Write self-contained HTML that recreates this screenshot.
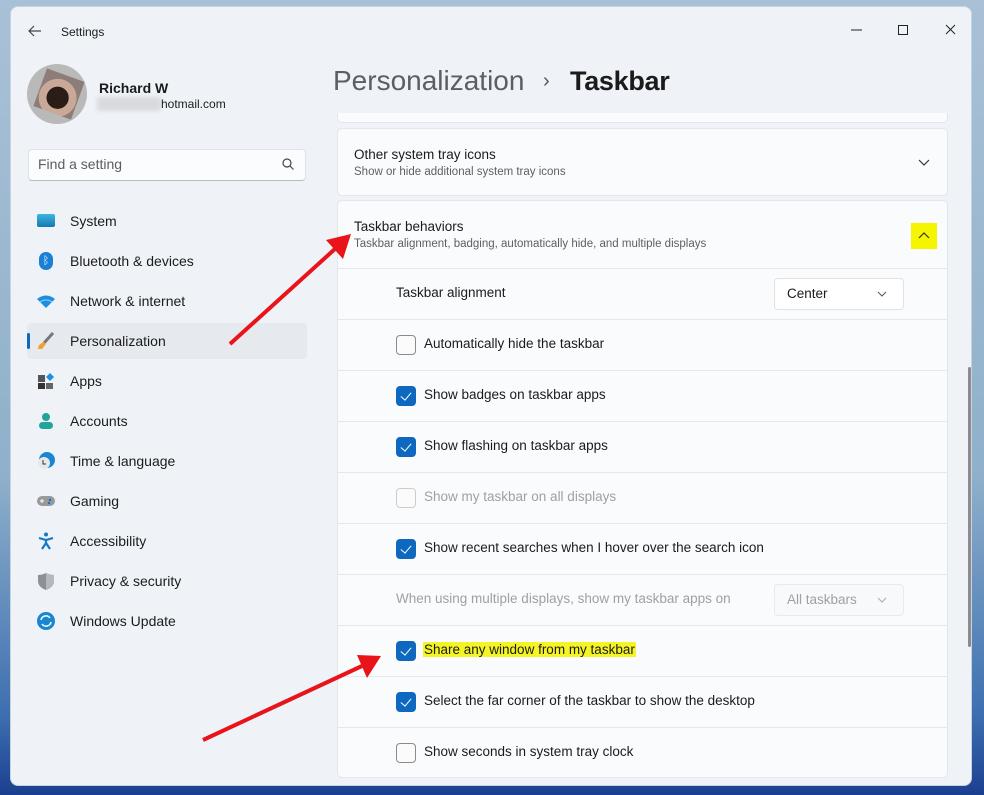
<!DOCTYPE html>
<html><head><style>
*{box-sizing:border-box;margin:0;padding:0}
body{width:984px;height:795px;overflow:hidden;font-family:"Liberation Sans",sans-serif;background:linear-gradient(180deg,#a9c1d6 0%,#8fb0cb 60%,#3d6fb0 90%,#1b3f8f 100%);position:relative}
.win{position:absolute;left:10px;top:6px;width:962px;height:780px;background:#eff3f8;border-radius:8px;overflow:hidden;border:1px solid #c9d3dd}
.t{position:absolute;white-space:nowrap;color:#1b1b1b}
.nav{position:absolute;left:16px;width:280px;height:36px;border-radius:4px}
.nav .t{left:43px;top:10px;font-size:14px}
.ic{position:absolute;left:10px;top:9px;width:18px;height:18px}
.clip{position:absolute;left:326px;top:106px;width:620px;height:674px;overflow:hidden}
.card{position:absolute;left:0;width:611px;background:#f9fbfd;border:1px solid #e3e6ea;border-radius:5px}
.row{position:absolute;left:0;width:609px;height:51px;border-top:1px solid #e5e7ea}
.row .t{font-size:13.5px;left:86px;top:16px}
.cb{position:absolute;left:58px;top:15px;width:20px;height:20px;border-radius:4px;border:1px solid #8a8a8a;background:#fbfbfb}
.cb.on{background:#0f68c0;border-color:#0f68c0}
.cb.on::after{content:"";position:absolute;left:6px;top:3px;width:5px;height:9px;border:solid #fff;border-width:0 1.5px 1.5px 0;transform:rotate(40deg)}
.dd{position:absolute;left:436px;top:9px;width:130px;height:32px;border:1px solid #e0e2e5;border-radius:4px;background:#fff;font-size:13.5px}
</style></head><body>
<div class="win">
<svg style="position:absolute;left:16px;top:17px" width="16" height="14"><path d="M14 7H2M7 2L2 7l5 5" stroke="#444" stroke-width="1.2" fill="none"/></svg>
<div class="t" style="left:50px;top:18px;font-size:12px">Settings</div>
<svg style="position:absolute;left:840px;top:15px" width="110" height="16"><path d="M0 8h11" stroke="#222"/><rect x="47.5" y="3.5" width="9" height="9" fill="none" stroke="#222"/><path d="M95 3l9 9M104 3l-9 9" stroke="#222"/></svg>
<div style="position:absolute;left:16px;top:57px;width:60px;height:60px;border-radius:50%;background:#b9b9b9;overflow:hidden"><div style="position:absolute;left:12px;top:10px;width:40px;height:40px;transform:rotate(20deg);background:radial-gradient(circle at 50% 60%,#2a1d18 0 35%,#c9a898 36% 60%,#8d7d78 61%)"></div></div>
<div class="t" style="left:88px;top:73px;font-size:14px;font-weight:bold">Richard W</div>
<div style="position:absolute;left:86px;top:90px;width:64px;height:14px;background:#d8dadd;filter:blur(2px)"></div>
<div class="t" style="left:150px;top:90px;font-size:12px">hotmail.com</div>
<div style="position:absolute;left:17px;top:142px;width:278px;height:32px;background:#fbfcfd;border:1px solid #dfe2e6;border-bottom-color:#b8bcc2;border-radius:4px"></div>
<div class="t" style="left:27px;top:149px;font-size:14px;color:#5d5d5d">Find a setting</div>
<svg style="position:absolute;left:270px;top:150px" width="14" height="14"><circle cx="6" cy="6" r="4" fill="none" stroke="#444" stroke-width="1.2"/><path d="M9 9l3.5 3.5" stroke="#444" stroke-width="1.2"/></svg>

<div class="nav" style="top:196px"><div class="ic" style="background:linear-gradient(#3fb5e0,#1479b0);height:13px;top:11px;border-radius:2px"></div><div class="t">System</div></div>
<div class="nav" style="top:236px"><div class="ic" style="background:#1b7fd6;border-radius:9px;width:14px;left:12px;color:#fff;font-size:11px;text-align:center;line-height:18px">ᛒ</div><div class="t">Bluetooth &amp; devices</div></div>
<div class="nav" style="top:276px"><svg class="ic" viewBox="0 0 18 18"><path d="M0 7q9-7 18 0L9 16z" fill="#1d8ee0"/><path d="M3 10q6-4 12 0" stroke="#8fd0f5" fill="none"/></svg><div class="t">Network &amp; internet</div></div>
<div class="nav" style="top:316px;background:#e6eaef"><div style="position:absolute;left:0;top:10px;width:3px;height:16px;background:#0f68c0;border-radius:2px"></div><svg class="ic" viewBox="0 0 18 18"><path d="M16 1L7 11" stroke="#777" stroke-width="3"/><path d="M7 10l2 2-4 5H1q0-5 6-7z" fill="#f0a030"/></svg><div class="t">Personalization</div></div>
<div class="nav" style="top:356px"><svg class="ic" viewBox="0 0 18 18"><rect x="1" y="3" width="7" height="7" fill="#555"/><rect x="1" y="11" width="7" height="6" fill="#333"/><rect x="9" y="11" width="7" height="6" fill="#666"/><path d="M13 1l4 4-4 4-4-4z" fill="#1d8ee0"/></svg><div class="t">Apps</div></div>
<div class="nav" style="top:396px"><svg class="ic" viewBox="0 0 18 18"><circle cx="9" cy="5" r="4" fill="#21a59a"/><rect x="2" y="10" width="14" height="7" rx="3.5" fill="#21a59a"/></svg><div class="t">Accounts</div></div>
<div class="nav" style="top:436px"><svg class="ic" viewBox="0 0 18 18"><circle cx="10" cy="8" r="8" fill="#1a86d0"/><circle cx="7" cy="11" r="6" fill="#e8e8e8"/><path d="M6 8v4h3" stroke="#333" fill="none"/></svg><div class="t">Time &amp; language</div></div>
<div class="nav" style="top:476px"><svg class="ic" viewBox="0 0 18 18"><rect x="0" y="4" width="18" height="10" rx="5" fill="#999"/><path d="M3 9h4M5 7v4" stroke="#fff"/><circle cx="13" cy="8" r="1.2" fill="#1d6fc0"/><circle cx="12" cy="11" r="1.2" fill="#1d6fc0"/></svg><div class="t">Gaming</div></div>
<div class="nav" style="top:516px"><svg class="ic" viewBox="0 0 18 18"><circle cx="9" cy="2.5" r="2" fill="#1478c8"/><path d="M2 6l7 2 7-2M9 8v3l-4 6M9 11l4 6" stroke="#1478c8" stroke-width="2.2" fill="none"/></svg><div class="t">Accessibility</div></div>
<div class="nav" style="top:556px"><svg class="ic" viewBox="0 0 18 18"><path d="M9 1q4 2 8 2v6q0 6-8 9-8-3-8-9V3q4 0 8-2z" fill="#8d9196"/><path d="M9 1q4 2 8 2v6q0 6-8 9z" fill="#b5b8bc"/></svg><div class="t">Privacy &amp; security</div></div>
<div class="nav" style="top:596px"><svg class="ic" viewBox="0 0 18 18"><circle cx="9" cy="9" r="9" fill="#1a86d0"/><path d="M4 8a5 5 0 0 1 9-2M14 10a5 5 0 0 1-9 2" stroke="#fff" stroke-width="1.5" fill="none"/></svg><div class="t">Windows Update</div></div>

<div class="t" style="left:322px;top:58px;font-size:28px;color:#5b5e62">Personalization</div>
<div class="t" style="left:532px;top:63px;font-size:20px;color:#555">›</div>
<div class="t" style="left:559px;top:59px;font-size:27px;font-weight:bold;color:#1b1b1b;letter-spacing:-0.3px">Taskbar</div>

<div style="position:absolute;left:957px;top:360px;width:3px;height:280px;background:#8a8c8f;border-radius:2px"></div>

<div class="clip">
<div class="card" style="top:-36px;height:46px"></div>
<div class="card" style="top:15px;height:68px">
<div class="t" style="left:16px;top:18px;font-size:13.5px">Other system tray icons</div>
<div class="t" style="left:16px;top:37px;font-size:11.5px;color:#5f5f5f">Show or hide additional system tray icons</div>
<svg style="position:absolute;left:579px;top:29px" width="14" height="10"><path d="M2 2l5 5 5-5" stroke="#333" fill="none" stroke-width="1.2"/></svg>
</div>
<div class="card" style="top:87px;height:578px">
<div class="t" style="left:16px;top:18px;font-size:13.5px">Taskbar behaviors</div>
<div class="t" style="left:16px;top:37px;font-size:11.5px;color:#5f5f5f">Taskbar alignment, badging, automatically hide, and multiple displays</div>
<div style="position:absolute;left:573px;top:22px;width:26px;height:26px;background:#f5f500"><svg width="26" height="26"><path d="M8 15l5-5 5 5" stroke="#333" fill="none" stroke-width="1.2"/></svg></div>
<div class="row" style="top:67px"><div class="t" style="left:58px">Taskbar alignment</div><div class="dd"><span class="t" style="left:12px;top:7px">Center</span><svg style="position:absolute;left:102px;top:11px" width="10" height="8"><path d="M1 2l4 4 4-4" stroke="#555" fill="none"/></svg></div></div>
<div class="row" style="top:118px"><div class="cb"></div><div class="t">Automatically hide the taskbar</div></div>
<div class="row" style="top:169px"><div class="cb on"></div><div class="t">Show badges on taskbar apps</div></div>
<div class="row" style="top:220px"><div class="cb on"></div><div class="t">Show flashing on taskbar apps</div></div>
<div class="row" style="top:271px"><div class="cb" style="border-color:#ccc"></div><div class="t" style="color:#a0a0a0">Show my taskbar on all displays</div></div>
<div class="row" style="top:322px"><div class="cb on"></div><div class="t">Show recent searches when I hover over the search icon</div></div>
<div class="row" style="top:373px"><div class="t" style="left:58px;color:#a0a0a0">When using multiple displays, show my taskbar apps on</div><div class="dd" style="background:#f7f9fb;border-color:#e8eaec"><span class="t" style="left:12px;top:7px;color:#a0a0a0">All taskbars</span><svg style="position:absolute;left:102px;top:11px" width="10" height="8"><path d="M1 2l4 4 4-4" stroke="#aaa" fill="none"/></svg></div></div>
<div class="row" style="top:424px"><div class="cb on"></div><div class="t" style="background:#f5f526;padding:0 1px;left:85px">Share any window from my taskbar</div></div>
<div class="row" style="top:475px"><div class="cb on"></div><div class="t">Select the far corner of the taskbar to show the desktop</div></div>
<div class="row" style="top:526px"><div class="cb"></div><div class="t">Show seconds in system tray clock</div></div>
</div>
</div>
</div>
<svg style="position:absolute;left:0;top:0" width="984" height="795">
<path d="M230 344L336 248" stroke="#e8141a" stroke-width="4"/><path d="M351 234L343 259 326 240z" fill="#e8141a"/>
<path d="M203 740L362 666" stroke="#e8141a" stroke-width="4"/><path d="M381 656L367 678 357 655z" fill="#e8141a"/>
</svg>
</body></html>
